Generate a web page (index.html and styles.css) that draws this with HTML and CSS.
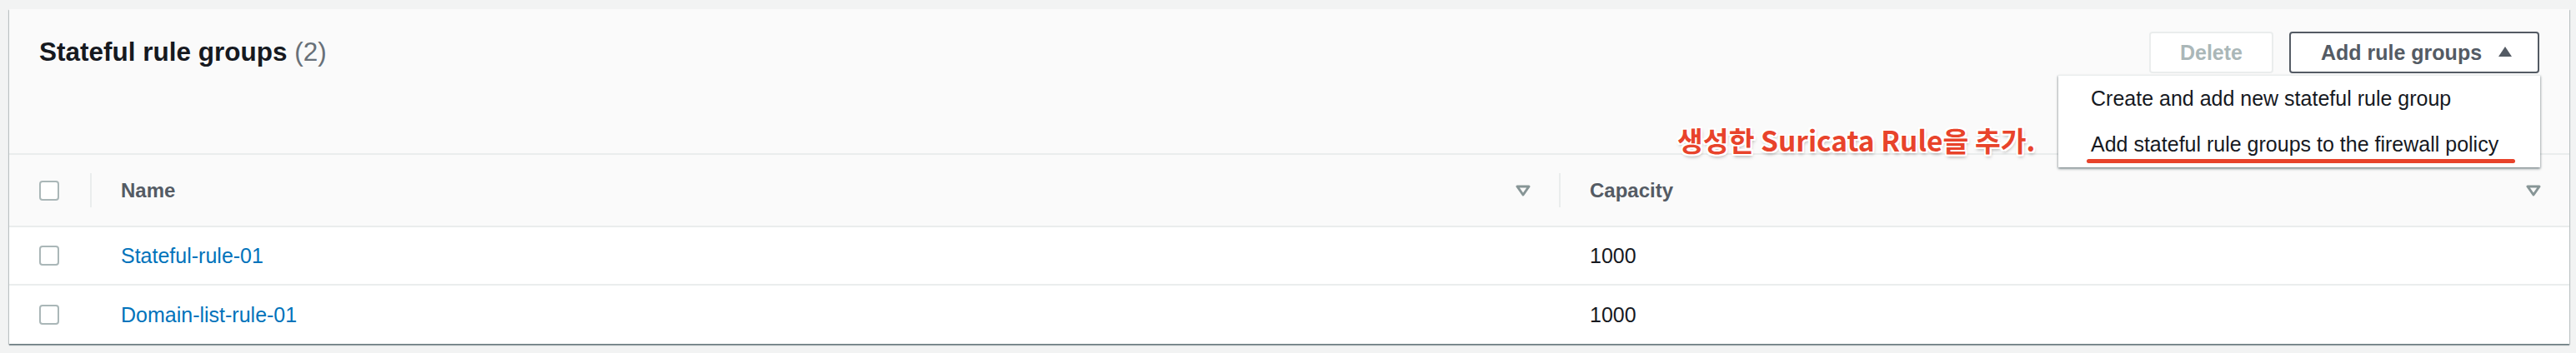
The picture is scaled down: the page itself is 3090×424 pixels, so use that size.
FILE: index.html
```html
<!DOCTYPE html>
<html lang="en">
<head>
<meta charset="utf-8">
<title>Stateful rule groups</title>
<link rel="stylesheet" href="styles.css">
</head>
<body>
<div class="panel">
  <div class="panel-header">
    <h2 class="title">Stateful rule groups <span class="counter">(2)</span></h2>
    <div class="actions">
      <button class="btn btn-disabled">Delete</button>
      <div class="dropdown-wrap">
        <button class="btn btn-normal">Add rule groups
          <svg class="caret" width="18" height="14" viewBox="0 0 18 14"><polygon points="9,1 17,13 1,13" fill="#545b64"/></svg>
        </button>
        <div class="menu">
          <div class="menu-item">Create and add new stateful rule group</div>
          <div class="menu-item">Add stateful rule groups to the firewall policy</div>
          <div class="mark-line"></div>
        </div>
      </div>
    </div>
    <div class="annotation">생성한 Suricata Rule을 추가.</div>
  </div>
  <div class="table">
    <div class="row head">
      <div class="cell c-check"><span class="checkbox"></span></div>
      <div class="cell c-name"><div class="th"><span>Name</span><svg class="sort" width="18" height="14" viewBox="0 0 18 14"><polygon points="2,2 16,2 9,12" fill="none" stroke="#879596" stroke-width="3" stroke-linejoin="round"/></svg></div></div>
      <div class="cell c-cap"><div class="th"><span>Capacity</span><svg class="sort" width="18" height="14" viewBox="0 0 18 14"><polygon points="2,2 16,2 9,12" fill="none" stroke="#879596" stroke-width="3" stroke-linejoin="round"/></svg></div></div>
    </div>
    <div class="row">
      <div class="cell c-check"><span class="checkbox"></span></div>
      <div class="cell c-name td"><a class="link" href="#">Stateful-rule-01</a></div>
      <div class="cell c-cap td">1000</div>
    </div>
    <div class="row">
      <div class="cell c-check"><span class="checkbox"></span></div>
      <div class="cell c-name td"><a class="link" href="#">Domain-list-rule-01</a></div>
      <div class="cell c-cap td">1000</div>
    </div>
  </div>
</div>
</body>
</html>
```
FILE: styles.css
```css
* { box-sizing: border-box; }
html, body { margin: 0; padding: 0; }
body {
  background: #f2f3f3;
  font-family: "Liberation Sans", Arial, sans-serif;
  color: #16191f;
  width: 3090px;
  height: 424px;
  overflow: hidden;
}
.panel {
  margin: 11px 8px 0 11px;
  background: #fafafa;
  box-shadow: 0 2px 1px 0 rgba(0,28,36,0.35), 1px 1px 1px 0 rgba(0,28,36,0.18), -1px 1px 1px 0 rgba(0,28,36,0.18);
  position: relative;
}
.panel-header {
  position: relative;
  display: flex;
  justify-content: space-between;
  align-items: flex-start;
  padding: 27px 36px 0 36px;
  height: 175px;
  border-bottom: 2px solid #eaeded;
}
.title {
  margin: 0;
  font-size: 31.5px;
  font-weight: 700;
  line-height: 49px;
  color: #16191f;
}
.counter { font-weight: 400; color: #687078; }
.actions { display: flex; gap: 19px; align-items: flex-start; }
.btn {
  font-family: inherit;
  font-size: 25px;
  font-weight: 700;
  height: 50px;
  border-radius: 4px;
  background: #fff;
  padding: 0 36px;
  display: flex;
  align-items: center;
}
.btn-disabled { color: #aab7b8; border: 2px solid #eaeded; width: 149px; justify-content: center; padding: 0; }
.btn-normal { color: #545b64; border: 2px solid #545b64; width: 300px; padding: 0 30px 0 36px; justify-content: space-between; }
.caret { display: block; margin-top: -2px; }
.dropdown-wrap { position: relative; }
.menu {
  position: absolute;
  top: 52px;
  right: -1px;
  width: 578px;
  background: #fff;
  border-top: 1px solid #eaeded;
  box-shadow: 0 2px 3px 0 rgba(0,28,36,0.35), 1px 1px 2px 0 rgba(0,28,36,0.15), -1px 1px 2px 0 rgba(0,28,36,0.15);
  z-index: 5;
}
.menu-item {
  height: 55px;
  display: flex;
  align-items: center;
  padding-left: 39px;
  font-size: 25px;
  color: #16191f;
  white-space: nowrap;
}
.mark-line {
  position: absolute;
  left: 34px;
  top: 100px;
  width: 514px;
  height: 5px;
  border-radius: 3px;
  background: #e8432b;
}
.annotation {
  position: absolute;
  left: 2001px;
  top: 134px;
  font-family: "Noto Sans CJK KR", sans-serif;
  font-weight: 700;
  font-size: 33.5px;
  line-height: 46px;
  color: #e8432b;
  white-space: nowrap;
  text-shadow: 2px 0 0 #fff, -2px 0 0 #fff, 0 2px 0 #fff, 0 -2px 0 #fff, 2px 2px 0 #fff, -2px 2px 0 #fff, 2px -2px 0 #fff, -2px -2px 0 #fff, 1px 3px 4px rgba(0,0,0,0.35);
  z-index: 4;
}
.table { display: flex; flex-direction: column; }
.row {
  display: grid;
  grid-template-columns: 97px 1762px 1fr;
  height: 70px;
  background: #fff;
  border-bottom: 2px solid #eaeded;
}
.row:last-child { border-bottom: 0; }
.row.head { height: 87px; background: #fafafa; }
.cell { display: flex; align-items: center; }
.c-check { padding-left: 36px; }
.checkbox {
  width: 24px;
  height: 24px;
  border: 2px solid #aab7b8;
  border-radius: 4px;
  background: #fff;
}
.th {
  flex: 1;
  height: 41px;
  border-left: 2px solid #eaeded;
  padding: 0 34px 0 35px;
  display: flex;
  align-items: center;
  justify-content: space-between;
  font-size: 24px;
  font-weight: 700;
  color: #545b64;
}
.sort { display: block; }
.td { padding-left: 37px; font-size: 25px; color: #16191f; }
.link { color: #0073bb; text-decoration: none; }
```
